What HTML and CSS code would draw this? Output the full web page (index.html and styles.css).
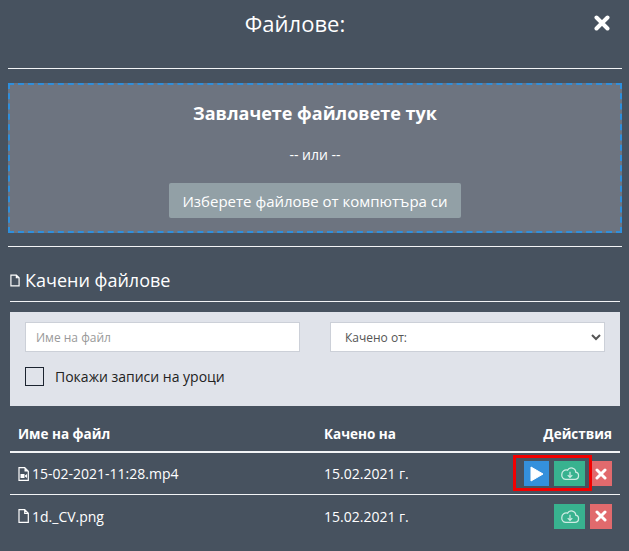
FILE: index.html
```html
<!DOCTYPE html>
<html lang="bg">
<head>
<meta charset="utf-8">
<title>Файлове</title>
<link rel="stylesheet" href="styles.css">
</head>
<body>
<div class="modal">
  <header class="modal-head">
    <h1 class="modal-title">Файлове:</h1>
    <button class="close" aria-label="Затвори">
      <svg viewBox="0 0 16 16" width="16" height="16"><path d="M2.5 2.5l11 11M13.500 2.500l-11 11" stroke="#fff" stroke-width="4" stroke-linecap="round"/></svg>
    </button>
  </header>
  <hr class="rule rule-first">
  <section class="dropzone">
    <div class="drop-title">Завлачете файловете тук</div>
    <div class="drop-or">-- или --</div>
    <button class="drop-btn">Изберете файлове от компютъра си</button>
  </section>
  <hr class="rule rule-second">
  <section class="files">
    <h2 class="files-title">
      <svg class="file-ico" viewBox="0 0 11 14" width="10" height="13"><path d="M1 1h6l3 3v9H1z M7 1v3h3" fill="none" stroke="#fff" stroke-width="1.300"/></svg>
      Качени файлове
    </h2>
    <div class="filters">
      <div class="filter-row">
        <input class="field" type="text" placeholder="Име на файл">
        <select class="field field-select"><option>Качено от:</option></select>
      </div>
      <label class="check"><span class="check-box"></span>Покажи записи на уроци</label>
    </div>
    <div class="table">
      <div class="row row-head">
        <div class="c-name">Име на файл</div>
        <div class="c-date">Качено на</div>
        <div class="c-act">Действия</div>
      </div>
      <div class="row row-body row-first">
        <div class="c-name">
          <svg class="file-ico" viewBox="0 0 11 14" width="11" height="14"><path fill="none" stroke="#fff" stroke-width="1.200" d="M1 .700h5.700L10.300 4.300v9H1z"/><path fill="#fff" d="M6.500 .700l3.800 3.800H6.500z M2.500 7h4v4h-4z M7 8.500L9 7v4L7 9.500z"/></svg>
          15-02-2021-11:28.mp4
        </div>
        <div class="c-date">15.02.2021 г.</div>
        <div class="c-act">
          <div class="actions">
            <span class="highlighted">
              <button class="btn btn-play" aria-label="Пусни"><svg viewBox="0 0 14 16" width="14" height="16"><path d="M1 1l12 7-12 7z" fill="#fff" stroke="#fff" stroke-linejoin="round"/></svg></button>
              <button class="btn btn-down" aria-label="Изтегли"><svg viewBox="0 0 22 16" width="20" height="15"><path d="M6 14.500h10.500a4 4 0 0 0 .8-7.900 4.800 4.800 0 0 0-9-2.300A4.800 4.800 0 0 0 2 8.800a5 5 0 0 0 4 5.700z M11 6v6 M8.500 9.800l2.500 2.500 2.500-2.500" fill="none" stroke="#fff" stroke-width="1.400" opacity=".75"/></svg></button>
            </span>
            <button class="btn btn-del" aria-label="Изтрий"><svg viewBox="0 0 12 12" width="12" height="12"><path d="M2 2l8 8M10 2l-8 8" stroke="#fff" stroke-width="3" stroke-linecap="round"/></svg></button>
          </div>
        </div>
      </div>
      <div class="row row-body">
        <div class="c-name">
          <svg class="file-ico" viewBox="0 0 11 14" width="11" height="14"><path d="M1 .700h5.700L10.300 4.300v9H1z M6.700 .700v3.600h3.600" fill="none" stroke="#fff" stroke-width="1.200"/></svg>
          1d._CV.png
        </div>
        <div class="c-date">15.02.2021 г.</div>
        <div class="c-act">
          <div class="actions">
            <button class="btn btn-down" aria-label="Изтегли"><svg viewBox="0 0 22 16" width="20" height="15"><path d="M6 14.500h10.500a4 4 0 0 0 .8-7.900 4.800 4.800 0 0 0-9-2.300A4.800 4.800 0 0 0 2 8.800a5 5 0 0 0 4 5.700z M11 6v6 M8.500 9.800l2.500 2.500 2.500-2.500" fill="none" stroke="#fff" stroke-width="1.400" opacity=".75"/></svg></button>
            <button class="btn btn-del" aria-label="Изтрий"><svg viewBox="0 0 12 12" width="12" height="12"><path d="M2 2l8 8M10 2l-8 8" stroke="#fff" stroke-width="3" stroke-linecap="round"/></svg></button>
          </div>
        </div>
      </div>
    </div>
  </section>
</div>
</body>
</html>
```

FILE: styles.css
```css
* { box-sizing: border-box; }
html, body { margin: 0; height: 100%; }
body {
  background: #47525f;
  font-family: "Open Sans", "Noto Sans", sans-serif;
  color: #fff;
  overflow: hidden;
}
.modal { height: 551px; padding: 0 7px 0 8px; }
.modal-head {
  height: 68px;
  position: relative;
  display: flex;
  justify-content: center;
  padding: 8px 40px 0 0;
}
.modal-title { margin: 0; font-size: 22px; font-weight: 400; line-height: 30px; }
.close {
  position: absolute;
  right: 12px;
  top: 15px;
  padding: 0;
  border: 0;
  background: none;
  line-height: 0;
}
.rule { margin: 0; border: 0; height: 1px; background: #f2f4f6; }
.rule-first { margin-bottom: 14px; }
.rule-second { margin-top: 13px; }
.dropzone {
  height: 150px;
  border: 2px dashed #2f8fdc;
  background: #6d7480;
  text-align: center;
  padding-top: 16px;
}
.drop-title { font-size: 18px; font-weight: 700; line-height: 24px; }
.drop-or { font-size: 14px; line-height: 18px; margin-top: 21px; }
.drop-btn {
  display: block;
  margin: 19px auto 0;
  width: 292px;
  height: 35px;
  border: 0;
  border-radius: 2px;
  background: #92a0a6;
  color: #fff;
  font: 400 15px/20px "Open Sans", "Noto Sans", sans-serif;
}
.files { padding: 0 2px 0 2px; }
.files-title {
  margin: 0 0 10px;
  height: 55px;
  padding: 20px 0 8px;
  border-bottom: 1px solid #f2f4f6;
  font-size: 18px;
  font-weight: 400;
  line-height: 26px;
  display: flex;
  align-items: center;
  gap: 5px;
}
.file-ico { flex: none; }
.filters {
  height: 94px;
  background: #e0e3ea;
  padding: 10px 15px 0;
  color: #222;
}
.filter-row { display: flex; justify-content: space-between; }
.field {
  width: 275px;
  height: 30px;
  border: 1px solid #ccd0d8;
  background: #fff;
  padding: 0 10px;
  font: 400 12px "Open Sans", "Noto Sans", sans-serif;
  color: #555;
  border-radius: 0;
}
.field::placeholder { color: #999; opacity: 1; }
.check {
  display: flex;
  align-items: center;
  gap: 11px;
  margin-top: 15px;
  font-size: 14px;
  line-height: 19px;
}
.check-box { width: 19px; height: 19px; border: 1px solid #1c2430; flex: none; }
.table { margin-top: 16px; font-size: 14px; }
.row { display: grid; grid-template-columns: 306px 180px 1fr; align-items: center; padding: 0 8px 0 8px; }
.row-head { height: 31px; padding-bottom: 6px; font-size: 13.500px; font-weight: 700; border-bottom: 2px solid #f2f4f6; }
.row-body { height: 42px; }
.row-first { border-bottom: 1px solid #f2f4f6; }
.c-name { display: flex; align-items: center; gap: 3px; }
.c-act { text-align: right; }
.actions { display: flex; justify-content: flex-end; gap: 5px; }
.highlighted {
  position: relative;
  display: flex;
  gap: 5px;
}
.highlighted::after {
  content: "";
  position: absolute;
  inset: -6px -7px -5px -11px;
  border: 3px solid #f20000;
  pointer-events: none;
}
.btn {
  height: 25px;
  border: 0;
  padding: 0;
  display: flex;
  align-items: center;
  justify-content: center;
}
.btn-play { width: 25px; background: #3490dc; }
.btn-down { width: 31px; background: #38b28f; }
.btn-del { width: 22px; background: #e16a6d; }
```
